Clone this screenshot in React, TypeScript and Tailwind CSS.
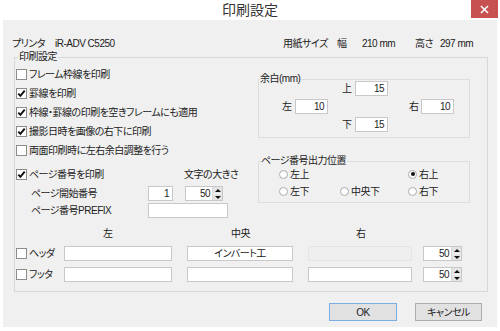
import React from "react";

const font =
  "font-['Liberation_Sans','Noto_Sans_CJK_JP',sans-serif] [font-feature-settings:'palt'] tracking-[-0.5px]";

const Check: React.FC<{ checked?: boolean }> = ({ checked }) => (
  <span className="flex h-[11px] w-[11px] shrink-0 items-center justify-center border border-[#8c8c8c] bg-white">
    {checked && (
      <svg width="9" height="9" viewBox="0 0 9 9">
        <path d="M1.3 4.6 L3.4 6.9 L7.7 1.6" stroke="#111" strokeWidth="1.9" fill="none" />
      </svg>
    )}
  </span>
);

const Radio: React.FC<{ checked?: boolean; label: string; className?: string }> = ({
  checked,
  label,
  className = "",
}) => (
  <div className={`flex items-center gap-[2px] ${className}`}>
    <span className="flex h-[9px] w-[9px] shrink-0 items-center justify-center rounded-full border border-[#ababab] bg-white">
      {checked && <span className="h-[4px] w-[4px] rounded-full bg-[#111]" />}
    </span>
    <span>{label}</span>
  </div>
);

const Box: React.FC<{ value?: string; className?: string }> = ({ value = "", className = "" }) => (
  <div
    className={`flex h-[15px] items-center justify-end border border-[#c8c8c8] bg-white pr-[3px] leading-none ${className}`}
  >
    {value}
  </div>
);

const Spin: React.FC<{ value: string; className?: string }> = ({ value, className = "" }) => (
  <div className={`flex h-[15px] border border-[#c8c8c8] bg-white ${className}`}>
    <div className="flex flex-1 items-center justify-end pr-[2px] leading-none">{value}</div>
    <div className="flex w-[10px] flex-col border-l border-[#d6d6d6] bg-[#e4e4e4]">
      <div className="flex flex-1 items-center justify-center">
        <span className="h-0 w-0 border-x-[3px] border-b-[3px] border-x-transparent border-b-[#111]" />
      </div>
      <div className="flex flex-1 items-center justify-center border-t border-[#f4f4f4]">
        <span className="h-0 w-0 border-x-[3px] border-t-[3px] border-x-transparent border-t-[#111]" />
      </div>
    </div>
  </div>
);

const checks = [
  { label: "フレーム枠線を印刷", checked: false },
  { label: "罫線を印刷", checked: true },
  { label: "枠線・罫線の印刷を空きフレームにも適用", checked: true },
  { label: "撮影日時を画像の右下に印刷", checked: true },
  { label: "両面印刷時に左右余白調整を行う", checked: false },
];

export default function App() {
  return (
    <div className={`flex h-[331px] w-[500px] flex-col bg-white text-[10px] text-[#222] ${font}`}>
      {/* title bar */}
      <div className="relative flex h-[20px] shrink-0 items-center justify-center text-[14px] tracking-normal text-[#333]">
        印刷設定
        <div className="absolute right-[2px] top-0 flex h-[18px] w-[27px] items-center justify-center bg-[#c75050]">
          <svg width="9" height="9" viewBox="0 0 9 9">
            <path d="M1 1 L8 8 M8 1 L1 8" stroke="#fff" strokeWidth="1.6" />
          </svg>
        </div>
      </div>

      <div className="mx-[3px] mb-[4px] flex flex-1 flex-col bg-[#f0f0f0]">
        {/* printer / paper info */}
        <div className="ml-[9px] mt-[16px] flex h-[14px] items-center">
          <div className="flex w-[271px]">
            <span className="w-[43px]">プリンタ</span>
            <span>iR-ADV C5250</span>
          </div>
          <span className="w-[54px]">用紙サイズ</span>
          <span className="w-[25px]">幅</span>
          <span className="w-[53px]">210 mm</span>
          <span className="w-[25px]">高さ</span>
          <span>297 mm</span>
        </div>

        {/* group box */}
        <div className="relative ml-[11px] mt-[7px] h-[235px] w-[474px] border border-[#d8d8d8]">
          <span className="absolute -top-[8px] left-[3px] bg-[#f0f0f0] px-[1px] leading-[14px]">
            印刷設定
          </span>

          <div className="flex">
            {/* left column */}
            <div className="flex w-[243px] flex-col pl-[1px] pt-[7px]">
              {checks.map((c) => (
                <div key={c.label} className="flex h-[19px] items-center gap-[2px]">
                  <Check checked={c.checked} />
                  <span>{c.label}</span>
                </div>
              ))}
              <div className="mt-[5px] flex h-[19px] items-center">
                <div className="flex w-[168px] items-center gap-[2px]">
                  <Check checked />
                  <span>ページ番号を印刷</span>
                </div>
                <span>文字の大きさ</span>
              </div>
              <div className="mt-[2px] flex h-[15px] items-center">
                <span className="ml-[15px] w-[117px]">ページ開始番号</span>
                <Box value="1" className="w-[25px]" />
                <Spin value="50" className="ml-[12px] w-[38px]" />
              </div>
              <div className="mt-[2px] flex h-[15px] items-center">
                <span className="ml-[15px] w-[117px]">ページ番号PREFIX</span>
                <Box className="w-[80px]" />
              </div>
            </div>

            {/* right column */}
            <div className="flex w-[212px] flex-col">
              <div className="relative mt-[21px] h-[59px] border border-[#dcdcdc]">
                <span className="absolute -top-[8px] left-[1px] bg-[#f0f0f0] pr-[1px] leading-[14px]">
                  余白(mm)
                </span>
                <div className="mt-[1px] flex items-center pl-[83px]">
                  <span className="w-[13px]">上</span>
                  <Box value="15" className="w-[33px]" />
                </div>
                <div className="mt-[3px] flex items-center pl-[23px]">
                  <span className="w-[13px]">左</span>
                  <Box value="10" className="w-[33px]" />
                  <span className="ml-[81px] w-[12px]">右</span>
                  <Box value="10" className="w-[33px]" />
                </div>
                <div className="mt-[3px] flex items-center pl-[83px]">
                  <span className="w-[13px]">下</span>
                  <Box value="15" className="w-[33px]" />
                </div>
              </div>

              <div className="relative mt-[23px] h-[42px] border border-[#dcdcdc]">
                <span className="absolute -top-[8px] left-[2px] bg-[#f0f0f0] pr-[1px] leading-[14px]">
                  ページ番号出力位置
                </span>
                <div className="mt-[5px] flex h-[14px] items-center pl-[20px]">
                  <Radio label="左上" className="w-[129px]" />
                  <Radio label="右上" checked />
                </div>
                <div className="mt-[3px] flex h-[14px] items-center pl-[20px]">
                  <Radio label="左下" className="w-[61px]" />
                  <Radio label="中央下" className="w-[68px]" />
                  <Radio label="右下" />
                </div>
              </div>
            </div>
          </div>

          {/* header / footer table */}
          <div className="mt-[8px] flex h-[14px] items-center">
            <span className="ml-[88px] w-[128px]">左</span>
            <span className="w-[125px]">中央</span>
            <span>右</span>
          </div>
          <div className="mt-[6px] flex h-[15px] items-center pl-[1px]">
            <div className="flex w-[48px] items-center gap-[2px]">
              <Check />
              <span>ヘッダ</span>
            </div>
            <Box className="w-[108px]" />
            <div className="ml-[15px] flex h-[15px] w-[106px] items-center justify-center border border-[#c8c8c8] bg-white">
              インバート工
            </div>
            <div className="ml-[15px] h-[15px] w-[104px] border border-[#e4e4e4] bg-[#efefef]" />
            <Spin value="50" className="ml-[11px] w-[39px]" />
          </div>
          <div className="mt-[6px] flex h-[15px] items-center pl-[1px]">
            <div className="flex w-[48px] items-center gap-[2px]">
              <Check />
              <span>フッタ</span>
            </div>
            <Box className="w-[108px]" />
            <Box className="ml-[15px] w-[106px]" />
            <Box className="ml-[15px] w-[104px]" />
            <Spin value="50" className="ml-[11px] w-[39px]" />
          </div>
        </div>

        {/* buttons */}
        <div className="mt-[11px] flex justify-end gap-[18px] pr-[15px]">
          <button className="flex h-[18px] w-[68px] items-center justify-center border border-[#7aaee3] bg-[#e1e1e1]">
            OK
          </button>
          <button className="flex h-[18px] w-[67px] items-center justify-center border border-[#adadad] bg-[#e1e1e1]">
            キャンセル
          </button>
        </div>
      </div>
    </div>
  );
}
